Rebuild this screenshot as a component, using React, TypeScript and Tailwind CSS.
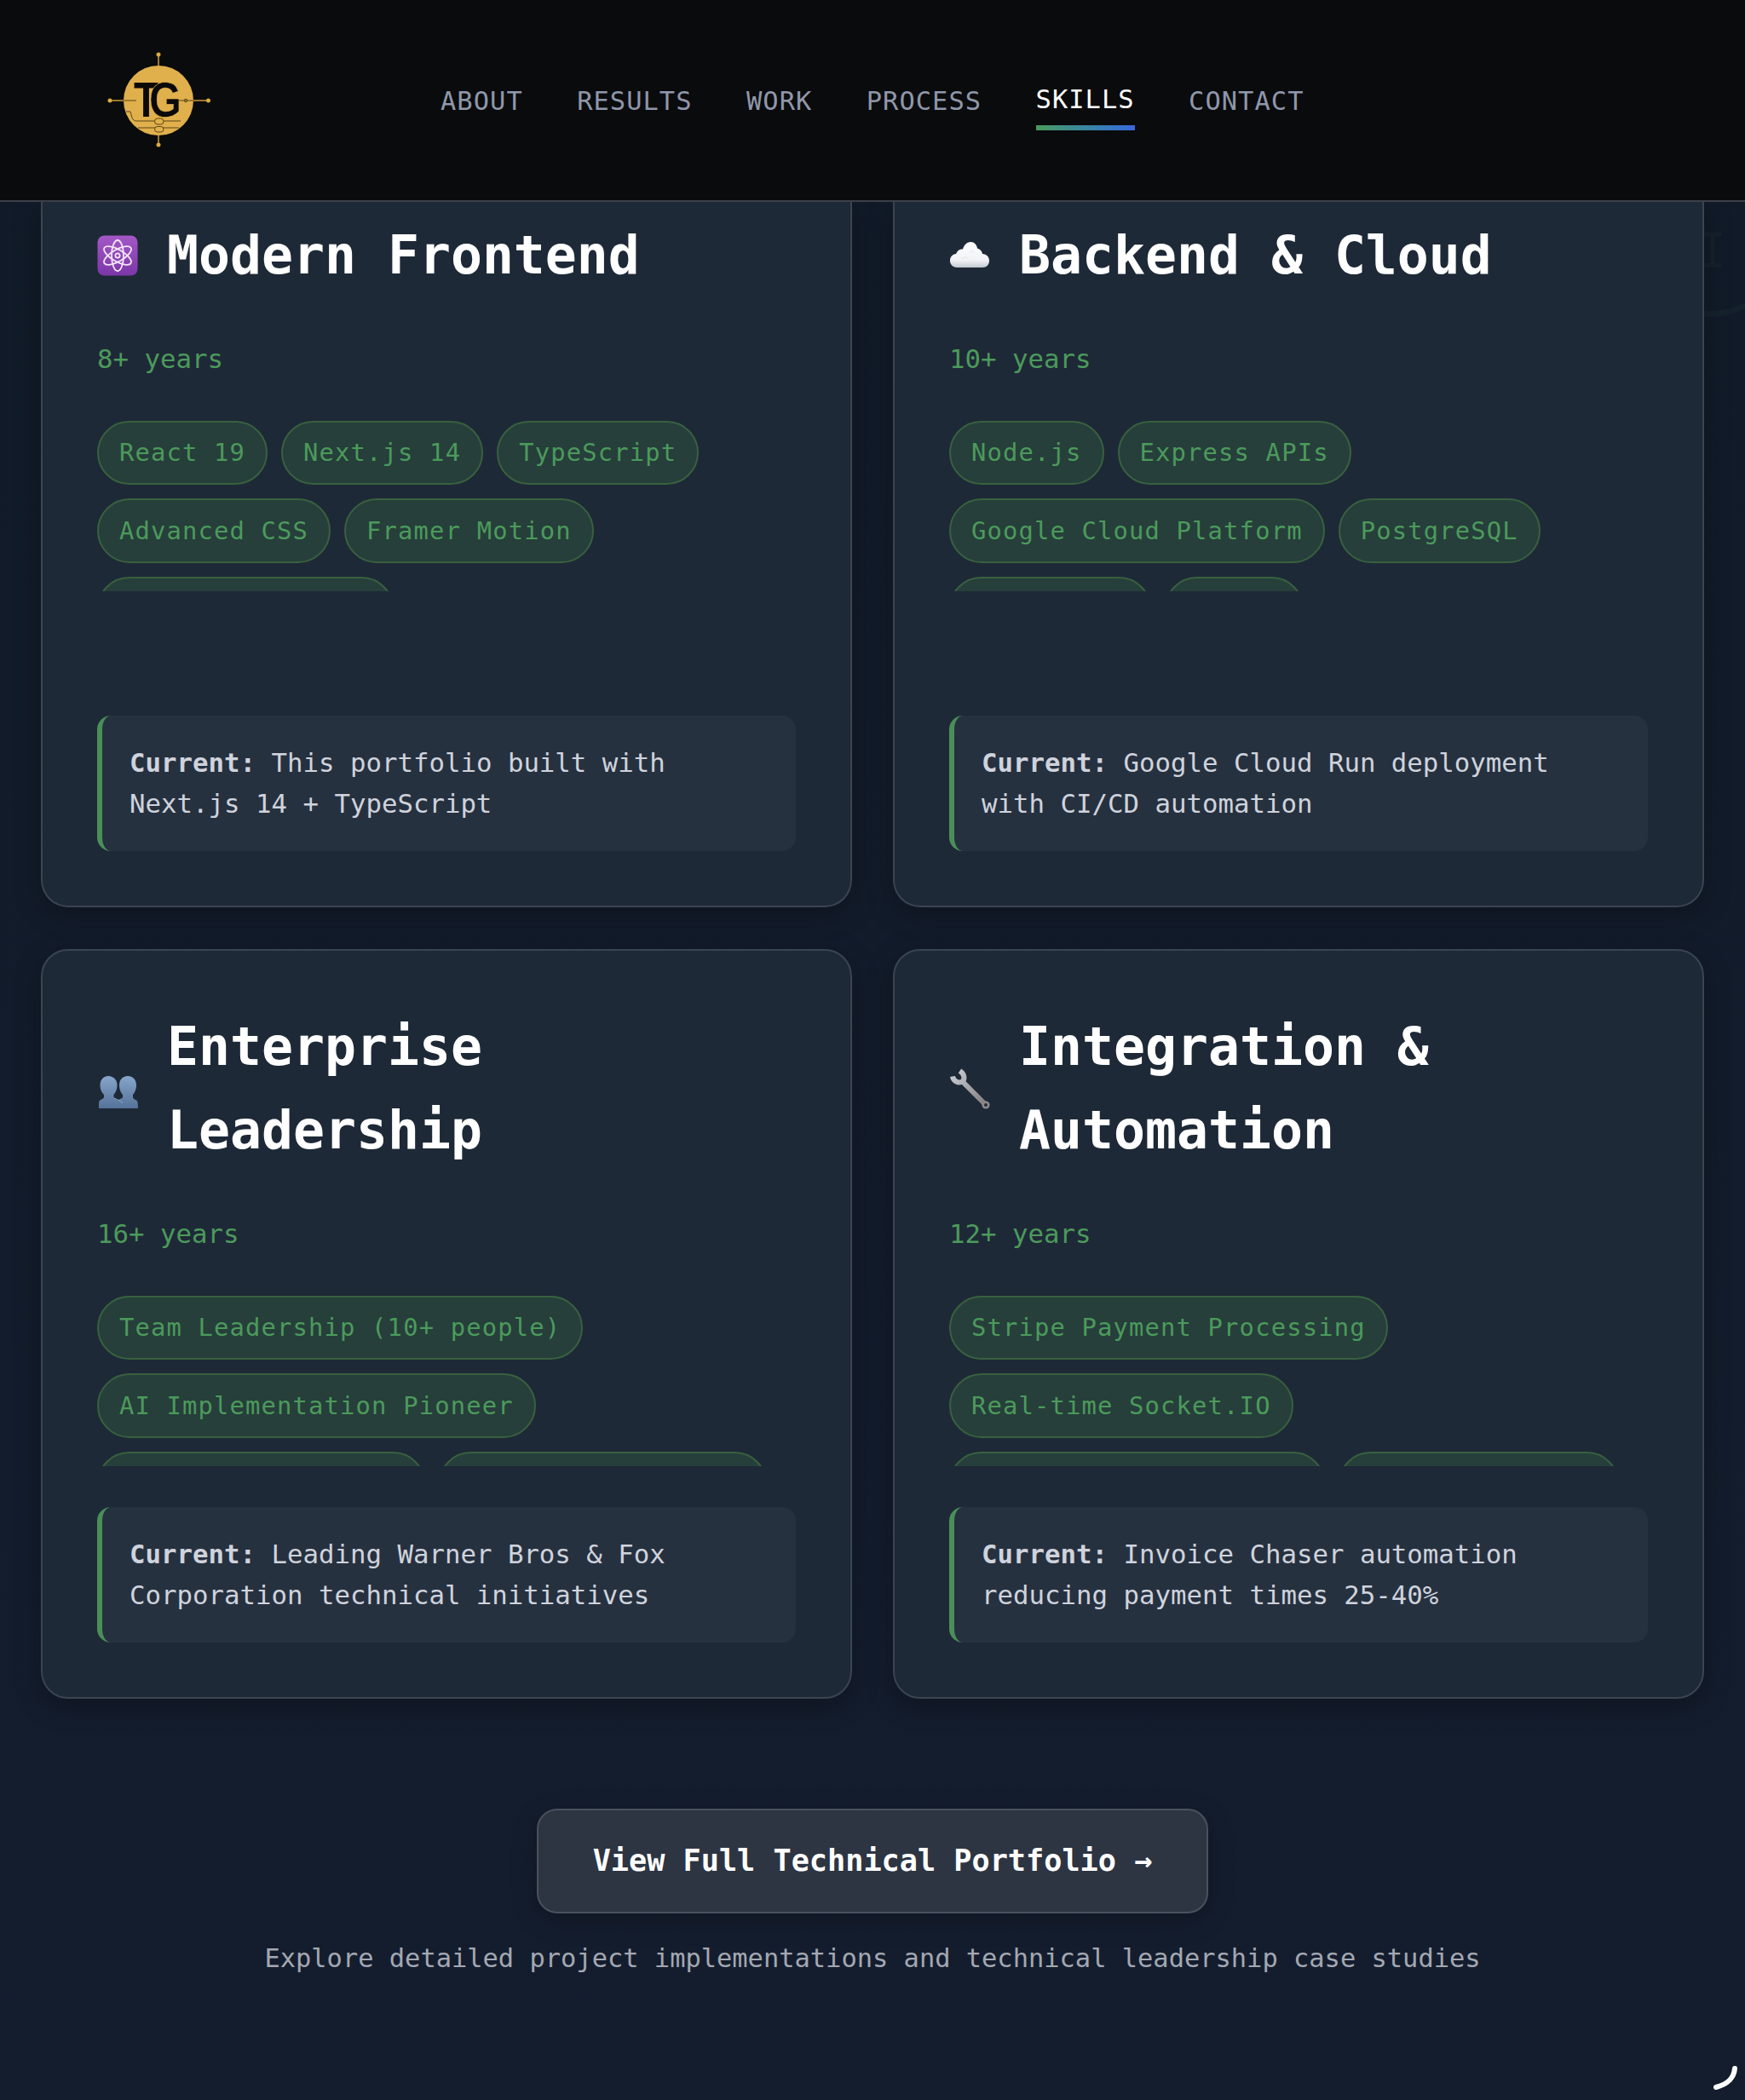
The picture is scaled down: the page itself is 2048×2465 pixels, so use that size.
const navItems = ['ABOUT', 'RESULTS', 'WORK', 'PROCESS', 'SKILLS', 'CONTACT'];

const Logo = () => (
  <svg width="124" height="124" viewBox="0 0 124 124" className="shrink-0">
    <g stroke="#d9a83f" strokeWidth="1.4" fill="#e0b04c">
      <line x1="5" y1="62" x2="21" y2="62" />
      <line x1="103" y1="62" x2="120" y2="62" />
      <line x1="62" y1="8" x2="62" y2="21" />
      <line x1="62" y1="103" x2="62" y2="114" />
      <circle cx="5" cy="62" r="1.800" />
      <circle cx="120.500" cy="62" r="1.800" />
      <circle cx="62" cy="8" r="1.800" />
      <circle cx="62" cy="114" r="1.800" />
    </g>
    <circle cx="62" cy="62" r="41" fill="#e0b04c" />
    <g stroke="#5c4415" strokeWidth="1" fill="none">
      <path d="M21 62H36" />
      <path d="M86 62H103" />
      <circle cx="94" cy="62" r="1.800" />
      <path d="M24 75H29L31 82C32 85 34 86 36 86H88" />
      <path d="M38 94H86" />
      <rect x="57.500" y="83" width="10.500" height="7" rx="3.500" fill="#e0b04c" />
      <rect x="57.500" y="92.500" width="10.500" height="6.500" rx="3.250" fill="#e0b04c" />
    </g>
    <text
      x="33"
      y="81"
      fontFamily="'Liberation Sans',sans-serif"
      fontWeight="700"
      fontSize="58"
      fill="#0b0a08"
      textLength="29"
      lengthAdjust="spacingAndGlyphs"
    >
      T
    </text>
    <text
      x="51"
      y="81"
      fontFamily="'Liberation Sans',sans-serif"
      fontWeight="700"
      fontSize="58"
      fill="#0b0a08"
      stroke="#e0b04c"
      strokeWidth="0.500"
      textLength="38"
      lengthAdjust="spacingAndGlyphs"
    >
      G
    </text>
  </svg>
);

const AtomIcon = () => (
  <svg width="48" height="48" viewBox="0 0 48 48">
    <defs>
      <linearGradient id="atomBg" x1="0" y1="0" x2="0" y2="1">
        <stop offset="0" stopColor="#a458c6" />
        <stop offset="1" stopColor="#7c36a8" />
      </linearGradient>
    </defs>
    <rect x="0.500" y="0.500" width="47" height="47" rx="8" fill="url(#atomBg)" />
    <g fill="none" stroke="#f3e6f7" strokeWidth="1.800">
      <ellipse cx="24" cy="24" rx="7" ry="18" />
      <ellipse cx="24" cy="24" rx="7" ry="18" transform="rotate(60 24 24)" />
      <ellipse cx="24" cy="24" rx="7" ry="18" transform="rotate(-60 24 24)" />
      <circle cx="24" cy="24" r="2.600" />
    </g>
  </svg>
);

const CloudIcon = () => (
  <svg width="48" height="48" viewBox="0 0 48 48">
    <defs>
      <linearGradient id="cloudFill" x1="0" y1="0" x2="0" y2="1">
        <stop offset="0" stopColor="#ffffff" />
        <stop offset="0.7" stopColor="#f2f3f6" />
        <stop offset="1" stopColor="#c4cad3" />
      </linearGradient>
    </defs>
    <path
      d="M9 38C4 38 1 34 1 30C1 25.500 4 22.500 8 22C9.500 18 12.500 16 16 16.500C17.500 11.500 21 8 25 8C29.500 8 32.500 11.500 33 15.500C36.500 16.500 38.500 19 39 22C44 22.500 47 25.500 47 30C47 34.500 44 38 39 38Z"
      fill="url(#cloudFill)"
    />
    <path d="M15 28C18 25 21 26 23 28M24 20C26 18 29 19 30 21" fill="none" stroke="#d9dde3" strokeWidth="0.800" />
  </svg>
);

const BustsIcon = () => (
  <svg width="48" height="48" viewBox="0 0 48 48">
    <defs>
      <linearGradient id="bustFill" x1="0" y1="0" x2="0" y2="1">
        <stop offset="0" stopColor="#87a6ca" />
        <stop offset="1" stopColor="#557299" />
      </linearGradient>
    </defs>
    <path
      d="M36 9C42 9 46 13.500 46 20C46 24.500 44.500 28 42 31V34C42 35.500 44 36.500 46 37.500C47.500 38.500 48 40 48 47H25V37L30 34.500V31C27.500 28 26 24.500 26 20C26 13.500 30 9 36 9Z"
      fill="url(#bustFill)"
    />
    <path
      d="M13 9C19 9 23.500 13.500 23.500 20C23.500 24.500 22 28 19.500 31V34.500C21.500 36 25 37 28 39C30.500 41 31 43 31 47H2V41C2 38.500 3 37.500 5 36.500C7 35.500 8 35 8 33.500V31C5 28 3.500 24.500 3.500 20C3.500 13.500 7.500 9 13 9Z"
      fill="url(#bustFill)"
    />
    <path d="M19.500 34.500C23 36.500 27 37.500 30 41" fill="none" stroke="#a9bfd8" strokeWidth="0.600" />
  </svg>
);

const WrenchIcon = () => (
  <svg width="48" height="48" viewBox="0 0 48 48">
    <defs>
      <linearGradient id="wrenchFill" gradientUnits="userSpaceOnUse" x1="5" y1="5" x2="45" y2="45">
        <stop offset="0" stopColor="#c6cad1" />
        <stop offset="1" stopColor="#7d7879" />
      </linearGradient>
    </defs>
    <path d="M14 14L43 43" fill="none" stroke="url(#wrenchFill)" strokeWidth="6" />
    <path d="M4 9.500C5 15 10 17.500 14.500 16C18.500 14 19 7.500 12.500 3" fill="none" stroke="url(#wrenchFill)" strokeWidth="6" />
    <circle cx="43" cy="43" r="4.600" fill="#8a8a8e" />
    <circle cx="43" cy="43" r="2" fill="#2c2c33" />
  </svg>
);

type Skill = {
  icon: React.ReactNode;
  title: string;
  years: string;
  tags: string[];
  current: string;
};

const skills: Skill[] = [
  {
    icon: <AtomIcon />,
    title: 'Modern Frontend',
    years: '8+ years',
    tags: ['React 19', 'Next.js 14', 'TypeScript', 'Advanced CSS', 'Framer Motion', 'Core Web Vitals+'],
    current: 'This portfolio built with Next.js 14 + TypeScript',
  },
  {
    icon: <CloudIcon />,
    title: 'Backend & Cloud',
    years: '10+ years',
    tags: ['Node.js', 'Express APIs', 'Google Cloud Platform', 'PostgreSQL', 'Kubernetes', 'Docker'],
    current: 'Google Cloud Run deployment with CI/CD automation',
  },
  {
    icon: <BustsIcon />,
    title: 'Enterprise Leadership',
    years: '16+ years',
    tags: ['Team Leadership (10+ people)', 'AI Implementation Pioneer', 'Enterprise Clients', 'Technical Strategy'],
    current: 'Leading Warner Bros & Fox Corporation technical initiatives',
  },
  {
    icon: <WrenchIcon />,
    title: 'Integration & Automation',
    years: '12+ years',
    tags: ['Stripe Payment Processing', 'Real-time Socket.IO', 'Webhook Architectures', 'Gmail API Syncs'],
    current: 'Invoice Chaser automation reducing payment times 25-40%',
  },
];

const SkillCard = ({ skill, clipped }: { skill: Skill; clipped: boolean }) => (
  <div
    className={`flex flex-col bg-[#1e2937] border-2 border-[#3a4452] px-16 pb-16 shadow-[0_8px_32px_rgba(0,0,0,0.25)] ${
      clipped ? 'h-[828px] rounded-b-[32px] border-t-0 pt-[14px]' : 'rounded-[32px] pt-16'
    }`}
  >
    <div className="flex items-center gap-[34px]">
      <div className="w-12 h-12 shrink-0">{skill.icon}</div>
      <h3 className="text-[61.440px] leading-[98px] font-bold text-white">{skill.title}</h3>
    </div>
    <p className="mt-12 text-[30.720px] leading-[48.6px] text-[#4c9a5b]">{skill.years}</p>
    <div className="mt-12 mb-12 max-h-[200px] overflow-hidden flex flex-wrap gap-x-4 gap-y-4 content-start">
      {skill.tags.map((tag) => (
        <span
          key={tag}
          className="rounded-full border-2 border-[#38613f] bg-[#263f3b] px-6 py-[12.800px] text-[28.8px] leading-[46px] tracking-[1.170px] text-[#4c9a5b] whitespace-nowrap"
        >
          {tag}
        </span>
      ))}
    </div>
    <div className="mt-auto rounded-2xl border-l-[6px] border-[#4a8f58] bg-[#263140] px-8 py-[31px] text-[30.720px] leading-[48.6px] text-[#cfd3dc]">
      <strong className="font-bold">Current:</strong> {skill.current}
    </div>
  </div>
);

export default function App() {
  return (
    <div className="relative h-[2465px] overflow-hidden bg-gradient-to-b from-[#111a28] to-[#141d2e] font-['DejaVu_Sans_Mono',monospace]">
      <header className="relative z-10 flex h-[237px] items-center border-b-2 border-[#3d4048] bg-[#0a0b0d] pl-[124px]">
        <Logo />
        <nav className="ml-[269px] flex items-center gap-[63.400px] pt-0.5">
          {navItems.map((item) => (
            <a
              key={item}
              className={`relative text-[30.4px] tracking-[1.050px] leading-[48px] ${
                item === 'SKILLS' ? 'text-white -translate-y-0.5' : 'text-[#8f97aa]'
              }`}
            >
              {item}
              {item === 'SKILLS' && (
                <span className="absolute left-0 right-0 top-[54px] h-1.5 bg-gradient-to-r from-[#4a9a58] to-[#3b66dc]" />
              )}
            </a>
          ))}
        </nav>
      </header>

      {/* faint backdrop marks in the right margin */}
      <span className="absolute left-[1993px] top-[262px] text-[56px] leading-[64px] text-[#4c9a5b]/5">I</span>
      <svg width="48" height="24" viewBox="0 0 48 24" className="absolute right-0 top-[352px]">
        <path d="M0 16C16 18 34 14 48 6" fill="none" stroke="#4c9a5b" strokeOpacity="0.05" strokeWidth="7" />
      </svg>

      <main className="px-12">
        <div className="grid grid-cols-2 gap-x-12 gap-y-[49px]">
          {skills.map((skill, i) => (
            <SkillCard key={skill.title} skill={skill} clipped={i < 2} />
          ))}
        </div>

        <div className="mt-[129px] flex flex-col items-center">
          <button className="rounded-3xl border-2 border-[#4a505d] bg-[#2d3543] px-16 py-[31.500px] text-[35.200px] leading-[56px] font-bold text-white shadow-[0_8px_32px_rgba(0,0,0,0.2)]">
            View Full Technical Portfolio →
          </button>
          <p className="mt-[29px] text-[30.400px] leading-[48px] text-[#a3a8b2]">
            Explore detailed project implementations and technical leadership case studies
          </p>
        </div>
      </main>

      <svg width="40" height="40" viewBox="0 0 40 40" className="absolute right-[4px] bottom-[4px]">
        <path d="M32 7C31 18 23 26 10 29" fill="none" stroke="#ffffff" strokeWidth="6" strokeLinecap="round" />
      </svg>
    </div>
  );
}
